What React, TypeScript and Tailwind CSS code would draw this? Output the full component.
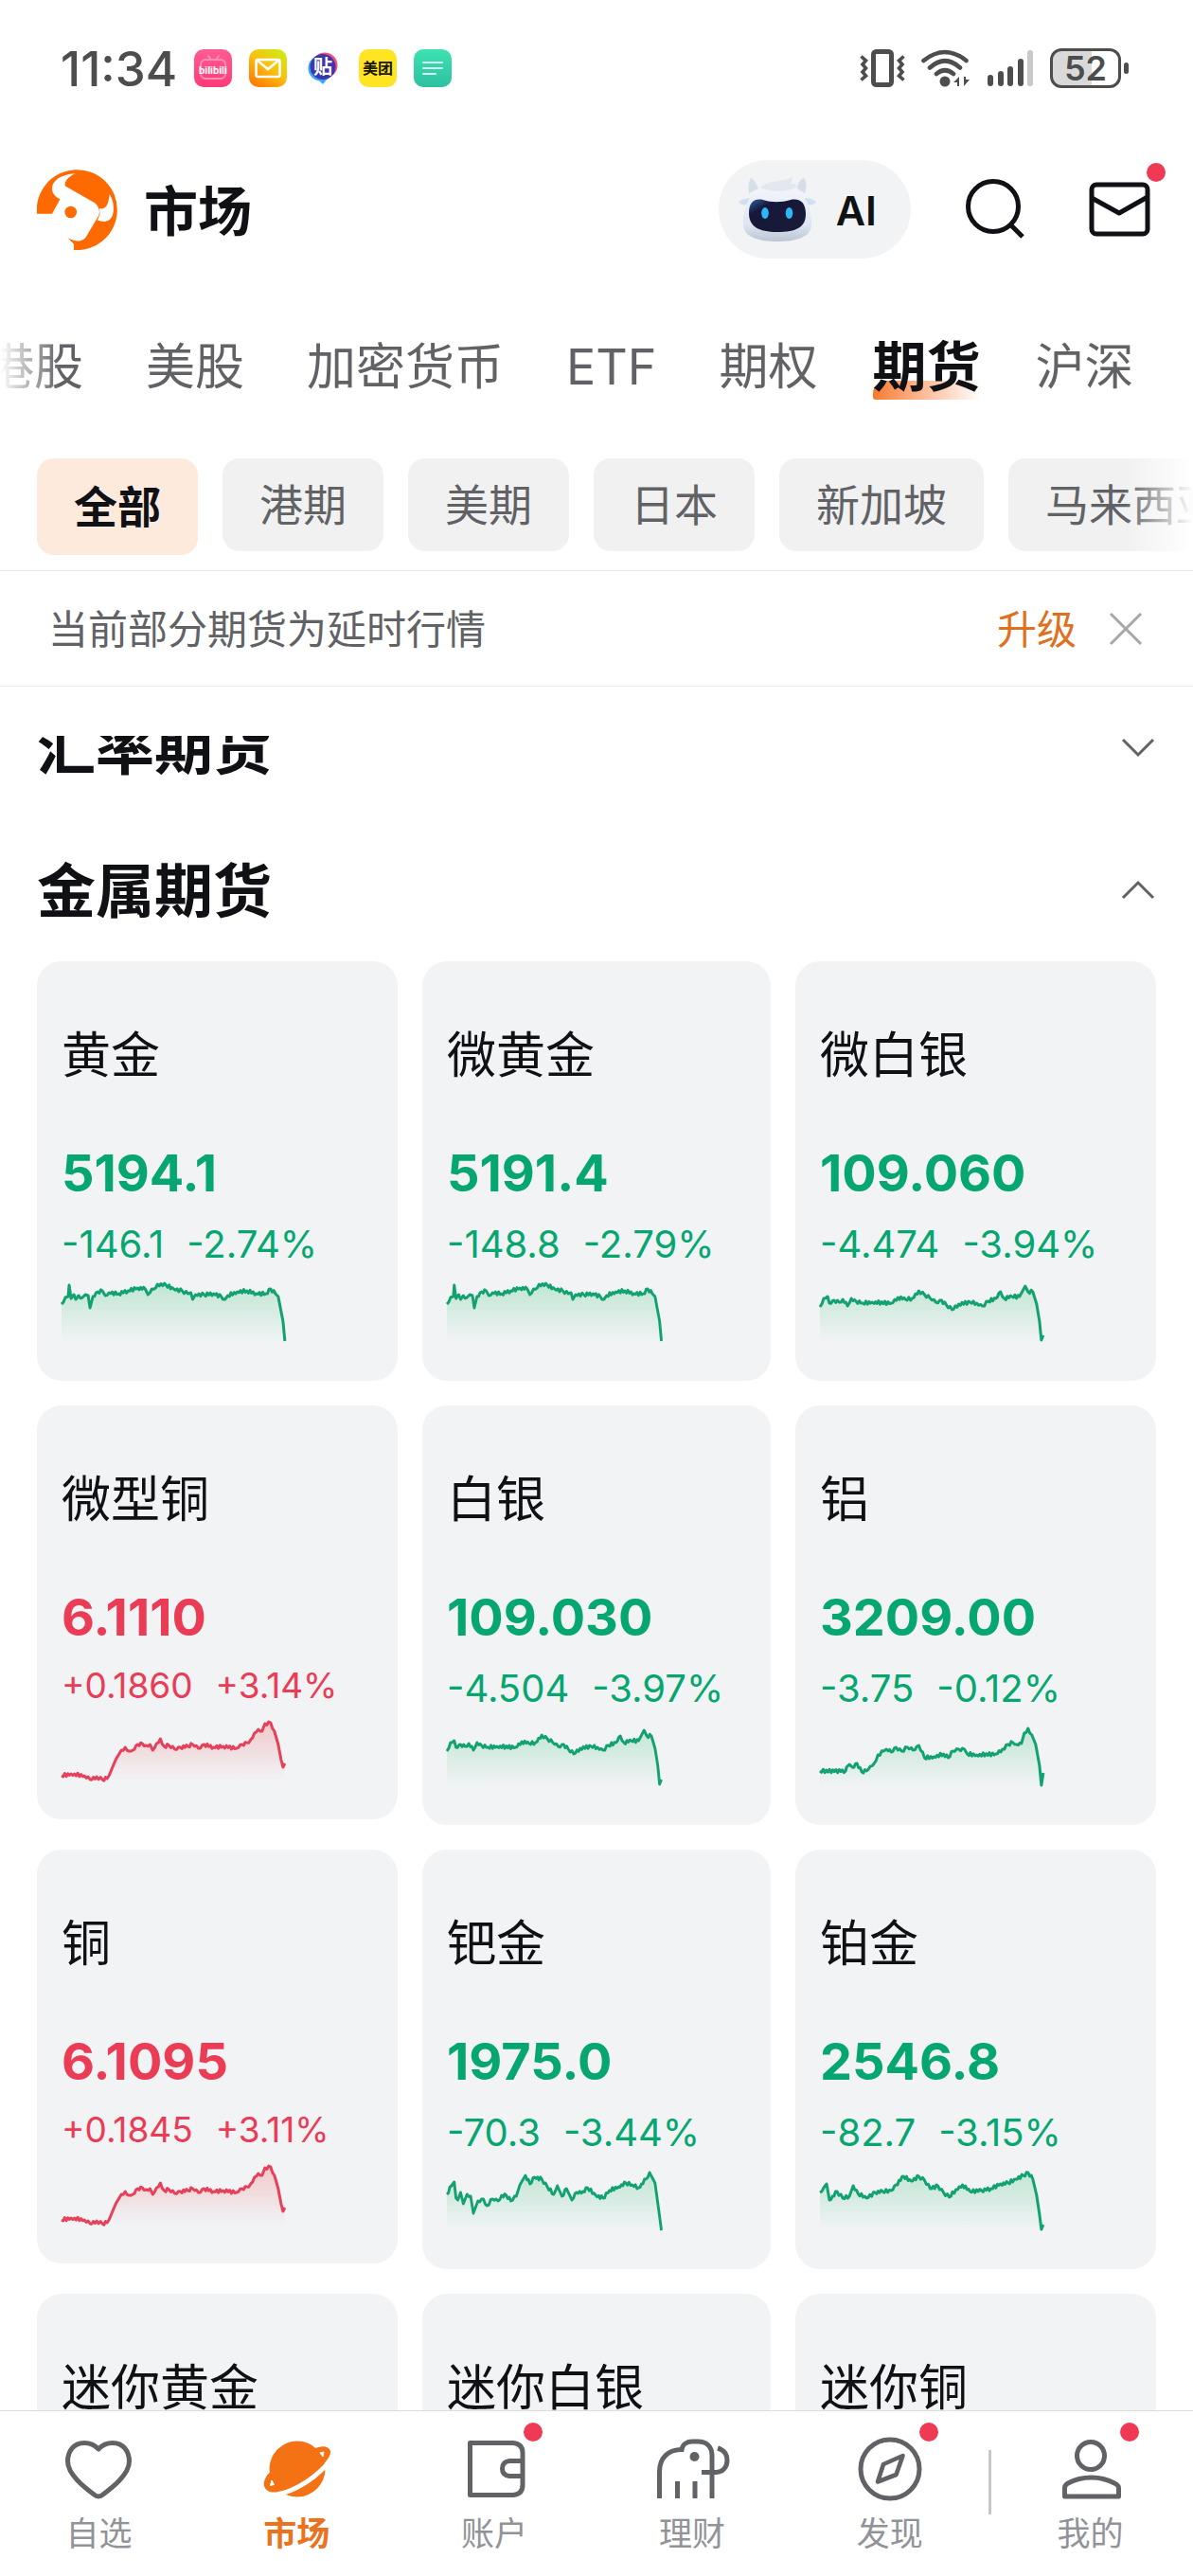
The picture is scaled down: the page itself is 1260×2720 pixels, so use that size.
import type { ReactNode } from "react";
import clsx from "clsx";

type Point = [number, number];

type Quote = {
  name: string;
  price?: string;
  change?: string;
  percent?: string;
  series?: Point[];
  up?: boolean;
  size?: "sm" | "lg";
};

const gold: Point[] = [
  [0, 22], [4, 15], [7, 14], [8, 2], [10, 16], [13, 12], [15, 17], [18, 13], [22, 15], [25, 12], [28, 13], [30, 26],
  [33, 14], [38, 9], [43, 8], [46, 13], [50, 10], [60, 11], [70, 8], [80, 5], [88, 6], [91, 12], [95, 6], [99, 5],
  [101, 1], [110, 2], [118, 6], [127, 8], [133, 11], [136, 10], [138, 17], [141, 12], [150, 12], [160, 11], [168, 14],
  [172, 17], [175, 13], [185, 9], [195, 8], [205, 11], [215, 11], [220, 6], [225, 11], [228, 14], [233, 40], [235, 61],
];

const silver: Point[] = [
  [0, 25], [4, 16], [8, 14], [10, 21], [15, 18], [20, 20], [24, 17], [29, 24], [33, 16], [38, 19], [45, 21], [55, 20],
  [75, 21], [82, 15], [90, 17], [97, 16], [104, 8], [110, 12], [116, 16], [122, 20], [128, 18], [133, 23], [139, 28],
  [146, 22], [158, 20], [165, 21], [171, 24], [177, 19], [185, 16], [190, 9], [194, 16], [202, 14], [210, 14],
  [216, 3], [219, 9], [224, 9], [228, 22], [231, 40], [233, 60], [235, 55],
];

const copper: Point[] = [
  [0, 57], [10, 55], [24, 57], [30, 61], [37, 58], [43, 61], [48, 60], [52, 52], [57, 40], [63, 30], [67, 27],
  [71, 31], [75, 30], [80, 24], [85, 23], [89, 25], [93, 24], [96, 30], [100, 23], [104, 18], [108, 26], [113, 25],
  [119, 29], [125, 27], [133, 26], [138, 24], [144, 28], [150, 24], [160, 27], [170, 26], [184, 28], [190, 24],
  [195, 22], [199, 19], [203, 12], [207, 8], [211, 10], [214, 2], [220, 1], [224, 10], [228, 24], [231, 40],
  [233, 48], [235, 44],
];

const aluminium: Point[] = [
  [0, 46], [27, 46], [28, 42], [31, 39], [34, 42], [39, 38], [44, 47], [49, 46], [53, 41], [57, 38], [61, 29],
  [67, 25], [70, 23], [75, 26], [80, 21], [86, 25], [92, 21], [98, 24], [104, 19], [108, 26], [110, 32], [120, 31],
  [130, 28], [135, 32], [140, 25], [146, 23], [152, 23], [155, 28], [165, 29], [185, 28], [192, 23], [198, 18],
  [203, 16], [207, 18], [212, 17], [215, 6], [219, 1], [223, 8], [227, 18], [231, 40], [233, 61], [235, 48],
];

const palladium: Point[] = [
  [0, 24], [5, 15], [8, 11], [10, 28], [12, 30], [15, 22], [18, 34], [22, 24], [26, 26], [29, 44], [34, 31], [40, 29],
  [44, 36], [50, 29], [56, 31], [60, 25], [65, 25], [70, 31], [76, 26], [80, 14], [86, 4], [91, 13], [96, 6], [104, 8],
  [110, 16], [117, 24], [121, 15], [126, 26], [131, 18], [137, 30], [142, 22], [149, 21], [154, 17], [163, 25],
  [171, 28], [178, 20], [188, 16], [196, 12], [203, 14], [210, 17], [218, 8], [222, 1], [228, 12], [232, 40], [235, 62],
];

const platinum: Point[] = [
  [0, 22], [4, 17], [7, 13], [10, 30], [18, 21], [24, 28], [31, 26], [35, 15], [40, 23], [49, 28], [58, 22], [66, 21],
  [75, 20], [80, 14], [88, 5], [96, 10], [104, 5], [110, 9], [116, 18], [124, 15], [130, 22], [136, 27], [143, 19],
  [150, 14], [158, 21], [170, 20], [180, 18], [190, 13], [198, 12], [206, 8], [214, 4], [219, 1], [224, 8], [228, 25],
  [231, 45], [233, 61], [235, 56],
];

const quotes: Quote[] = [
  { name: "黄金", price: "5194.1", change: "-146.1", percent: "-2.74%", series: gold },
  { name: "微黄金", price: "5191.4", change: "-148.8", percent: "-2.79%", series: gold },
  { name: "微白银", price: "109.060", change: "-4.474", percent: "-3.94%", series: silver },
  { name: "微型铜", price: "6.1110", change: "+0.1860", percent: "+3.14%", series: copper, up: true, size: "sm" },
  { name: "白银", price: "109.030", change: "-4.504", percent: "-3.97%", series: silver },
  { name: "铝", price: "3209.00", change: "-3.75", percent: "-0.12%", series: aluminium },
  { name: "铜", price: "6.1095", change: "+0.1845", percent: "+3.11%", series: copper, up: true, size: "sm" },
  { name: "钯金", price: "1975.0", change: "-70.3", percent: "-3.44%", series: palladium },
  { name: "铂金", price: "2546.8", change: "-82.7", percent: "-3.15%", series: platinum },
  { name: "迷你黄金" },
  { name: "迷你白银" },
  { name: "迷你铜" },
];

const markets = ["港股", "美股", "加密货币", "ETF", "期权", "期货", "沪深"];
const filters = ["全部", "港期", "美期", "日本", "新加坡", "马来西亚"];

// Fills the space between two ticks with small wiggles so the line looks like minute data.
function wiggle(points: Point[]): Point[] {
  const out: Point[] = [];
  points.forEach(([x, y], i) => {
    out.push([x, y]);
    const next = points[i + 1];
    if (!next || Math.abs(next[1] - y) > 9) return;
    const steps = Math.floor((next[0] - x) / 1.6);
    for (let s = 1; s < steps; s++) {
      const t = s / steps;
      const noise = (s % 2 ? 1 : -1) * (0.5 + Math.abs(Math.sin(x * 3 + s * 7)) * 1.3);
      out.push([x + (next[0] - x) * t, y + (next[1] - y) * t + noise]);
    }
  });
  return out;
}

function Sparkline({ id, points, up }: { id: string; points: Point[]; up?: boolean }) {
  const color = up ? "#e6405a" : "#12a170";
  const fill = up ? "#f25050" : "#35c070";
  const line = "M" + wiggle(points).map(([x, y]) => `${x.toFixed(1)} ${y.toFixed(1)}`).join("L");
  return (
    <svg viewBox="0 0 236 62" preserveAspectRatio="none" className="mt-3 block h-[62px] w-[72%] overflow-visible" aria-hidden="true">
      <defs>
        <linearGradient id={id} x1="0" y1="0" x2="0" y2="62" gradientUnits="userSpaceOnUse">
          <stop offset="0" stopColor={fill} stopOpacity="0.26" />
          <stop offset="1" stopColor={fill} stopOpacity="0" />
        </linearGradient>
      </defs>
      <path d={`${line}V62H0Z`} fill={`url(#${id})`} />
      <path d={line} fill="none" stroke={color} strokeWidth="3" strokeLinejoin="round" />
    </svg>
  );
}

function QuoteCard({ quote, id }: { quote: Quote; id: string }) {
  const { size = "lg" } = quote;
  return (
    <a href="#" className="block self-start rounded-[26px] bg-[#f1f3f5] px-[26px] pt-[60px] pb-[41px]">
      <h3 className="text-[52px] leading-[80px] whitespace-nowrap text-[#101114]">{quote.name}</h3>
      {quote.price && (
        <div className={quote.up ? "text-[#eb3c56]" : "text-[#06a670]"}>
          <p className="mt-11 text-[54px] leading-[80px] font-bold">{quote.price}</p>
          <p
            className={clsx(
              "mt-[6px] flex gap-6 whitespace-nowrap",
              size === "lg" ? "text-[40px] leading-[58px]" : "text-[37px] leading-[52px]",
            )}
          >
            <span>{quote.change}</span>
            <span>{quote.percent}</span>
          </p>
        </div>
      )}
      {quote.series && <Sparkline id={id} points={quote.series} up={quote.up} />}
    </a>
  );
}

function StatusBar() {
  return (
    <div className="flex h-36 items-center justify-between pr-[68px] pl-16 text-[#4d4d4d]">
      <div className="flex items-center gap-[18px]">
        <span className="text-[51px] leading-none font-medium">11:34</span>
        <svg width="40" height="40" viewBox="0 0 40 40" aria-label="bilibili">
          <defs>
            <linearGradient id="bili" x1="0" y1="0" x2="0" y2="1">
              <stop offset="0" stopColor="#ff5c94" />
              <stop offset="1" stopColor="#ff3a78" />
            </linearGradient>
          </defs>
          <rect width="40" height="40" rx="10" fill="url(#bili)" />
          <path d="M15 7l3 4M26 7l-3 4" stroke="#ff8db4" strokeWidth="2" strokeLinecap="round" />
          <rect x="7" y="11" width="26" height="20" rx="5" fill="none" stroke="#ff8db4" strokeWidth="2" />
          <text x="20" y="26" textAnchor="middle" fontSize="11" fontWeight="700" fill="#fff" fontFamily="Roboto, sans-serif">
            bilibili
          </text>
        </svg>
        <svg width="40" height="40" viewBox="0 0 40 40" aria-hidden="true">
          <defs>
            <linearGradient id="mail" x1="0.2" y1="1" x2="0.9" y2="0">
              <stop offset="0" stopColor="#ff7a00" />
              <stop offset="0.5" stopColor="#fbbf10" />
              <stop offset="1" stopColor="#c9f012" />
            </linearGradient>
          </defs>
          <rect width="40" height="40" rx="10" fill="url(#mail)" />
          <rect x="7.500" y="11" width="25" height="18" rx="2" fill="none" stroke="#fff" strokeWidth="2.600" />
          <path d="M9 12l11 9 11-9" fill="none" stroke="#fff" strokeWidth="2.600" />
        </svg>
        <svg width="40" height="40" viewBox="0 0 40 40" aria-hidden="true">
          <circle cx="22" cy="17" r="13.500" fill="#f0527c" />
          <circle cx="18" cy="20" r="13.500" fill="#38a6ff" />
          <path d="M15 32l5 5 4-5z" fill="#38a6ff" />
          <circle cx="20" cy="18.500" r="13.500" fill="#3f36a8" />
          <text x="20" y="26" textAnchor="middle" fontSize="20" fontWeight="700" fill="#fff">
            贴
          </text>
        </svg>
        <svg width="40" height="40" viewBox="0 0 40 40" aria-hidden="true">
          <rect width="40" height="40" rx="10" fill="#ffe424" />
          <text x="20" y="26" textAnchor="middle" fontSize="16" fontWeight="700" fill="#1a1800">
            美团
          </text>
        </svg>
        <svg width="40" height="40" viewBox="0 0 40 40" aria-hidden="true">
          <defs>
            <linearGradient id="note" x1="0" y1="0" x2="0" y2="1">
              <stop offset="0" stopColor="#3de3b2" />
              <stop offset="1" stopColor="#2dc0a0" />
            </linearGradient>
          </defs>
          <rect width="40" height="40" rx="10" fill="url(#note)" />
          <path d="M10 14h20M10 20h20M10 26h13" stroke="#d8fff2" strokeWidth="2" strokeLinecap="round" />
        </svg>
      </div>
      <div className="flex items-center gap-[17px]">
        <svg width="48" height="40" viewBox="0 0 48 40" fill="none" stroke="currentColor" aria-hidden="true">
          <rect x="14.500" y="2.500" width="19" height="35" rx="3" strokeWidth="5" />
          <path d="M1.500 7.500l5 4.500-3.500 4 3.500 4-3.500 4 3.500 4-5 4.500M46.500 7.500l-5 4.500 3.500 4-3.500 4 3.500 4-3.500 4 5 4.500" strokeWidth="3.600" />
        </svg>
        <svg width="52" height="40" viewBox="0 0 52 40" fill="none" stroke="currentColor" aria-hidden="true">
          <path d="M2.500 12Q25 -6 47.500 12M9 19.500Q25 5 41 19.500M16 26Q25 18.500 34 26" strokeWidth="4.600" strokeLinecap="round" />
          <circle cx="25" cy="34" r="5.500" fill="currentColor" stroke="none" />
          <path d="M34 35l6-6v10h-2v-4zM51 32l-6 7V29h2v3z" fill="currentColor" stroke="none" />
        </svg>
        <svg width="50" height="40" viewBox="0 0 50 40" fill="currentColor" aria-hidden="true">
          <rect x="1" y="27" width="6" height="12" rx="3" />
          <rect x="12" y="23" width="6" height="16" rx="3" />
          <rect x="22" y="18" width="6" height="21" rx="3" />
          <rect x="33" y="10" width="6" height="29" rx="3" />
          <rect x="43" y="1" width="6" height="38" rx="3" fill="#c9c9c9" />
        </svg>
        <div className="flex items-center gap-[3px]">
          <div className="flex h-[42px] w-[75px] items-center justify-center rounded-[12px] border-[3px] border-current bg-linear-to-r from-[#d9d9d9] from-60% to-transparent to-60%">
            <span className="text-[36px] leading-none font-semibold">52</span>
          </div>
          <div className="h-3 w-[5px] rounded-full bg-current" />
        </div>
      </div>
    </div>
  );
}

function Dot({ className }: { className?: string }) {
  return <span className={clsx("absolute size-5 rounded-full bg-[#ef3a55]", className)} />;
}

function Logo() {
  return (
    <svg width="85" height="85" viewBox="0 0 85 85" aria-hidden="true">
      <path
        d="M0 46.700A42.500 42.500 0 1 1 39 85V78.700L32.500 72C40 76.500 48 77 52 71L65 49C67 45 66 40 61.500 35.500L30 17.500C28 13 34 7 40.500 4.300C25 5 16 12 16 20C16 26 20 29 24.500 31.300L16 46.700Z"
        fill="#ff6a00"
      />
      <path d="M66 41C72 42.500 76 38 76.500 26C81 32 82 42 80 48C77 56 70 56 64 53.500L66.500 47Z" fill="#fff" />
      <circle cx="35.700" cy="45" r="6.300" fill="#ff6a00" />
    </svg>
  );
}

function Robot() {
  return (
    <svg width="84" height="72" viewBox="0 0 84 72" aria-hidden="true">
      <defs>
        <linearGradient id="shell" x1="0" y1="0" x2="0" y2="1">
          <stop offset="0" stopColor="#f5f7fb" />
          <stop offset="0.7" stopColor="#dde6f2" />
          <stop offset="1" stopColor="#bcc5d4" />
        </linearGradient>
        <linearGradient id="visor" x1="0" y1="0" x2="1" y2="1">
          <stop offset="0" stopColor="#2f63a8" />
          <stop offset="0.25" stopColor="#15183a" />
          <stop offset="1" stopColor="#1b1a38" />
        </linearGradient>
      </defs>
      <path d="M12 19C11 11 12 6 14 3C17 4 20 9 22 14ZM71 19C74 11 72 6 70 3C66 4 64 9 63 14Z" fill="#d5dfea" />
      <path d="M1 28C6 25 10 24 13 24L10 31C6 32 3 31 1 28ZM83 28C79 25 75 24 71 24L74 31C78 32 81 31 83 28Z" fill="#cfe0f2" />
      <path d="M6 53C5 36 12 10 41 10C71 10 79 36 78 53C77 66 60 70 42 70C24 70 7 66 6 53Z" fill="url(#shell)" />
      <path d="M24 13C32 5 48 7 58 2C58 5 57 7 55 9C60 8 62 9 63 12C54 18 36 19 24 13Z" fill="#e3e8ee" />
      <path d="M12 40C12 28 18 24 27 26C36 29 46 29 56 26C66 24 72 29 72 41C72 55 62 60 42 60C22 60 12 54 12 40Z" fill="url(#visor)" />
      <ellipse cx="29" cy="40" rx="3.800" ry="6" fill="#2db7fb" />
      <ellipse cx="54.500" cy="40" rx="3.800" ry="6" fill="#2db7fb" />
    </svg>
  );
}

function Header() {
  return (
    <header className="flex items-center justify-between pt-[25px] pr-[42px] pl-[39px]">
      <div className="flex items-center gap-7">
        <Logo />
        <h1 className="pt-1 text-[57px] leading-none font-bold text-[#101114]">市场</h1>
      </div>
      <div className="flex items-center gap-14 text-[#101114]">
        <button type="button" className="flex h-[104px] items-center gap-5 rounded-full bg-[#f1f3f5] pr-9 pl-5">
          <Robot />
          <span className="pt-[2px] text-[43px] leading-none font-semibold">AI</span>
        </button>
        <button type="button" aria-label="搜索">
          <svg width="72" height="72" viewBox="0 0 72 72" fill="none" stroke="currentColor" strokeWidth="5" aria-hidden="true">
            <circle cx="31" cy="33" r="26.500" />
            <path d="M49 52L62 65" />
          </svg>
        </button>
        <button type="button" aria-label="消息" className="relative">
          <svg width="72" height="72" viewBox="0 0 72 72" fill="none" stroke="currentColor" strokeWidth="5" strokeLinejoin="round" aria-hidden="true">
            <rect x="7" y="10" width="59" height="52" rx="5" />
            <path d="M7 24L36 40L66 23" />
          </svg>
          <Dot className="-top-[13px] left-[65px]" />
        </button>
      </div>
    </header>
  );
}

function MarketTabs() {
  return (
    <nav className="relative mt-[75px] overflow-hidden">
      <div className="-ml-4 flex h-20 items-center gap-[66px] text-[52px] leading-[80px] whitespace-nowrap text-[#616266]">
        {markets.map((m) =>
          m === "期货" ? (
            <a key={m} href="#" aria-current="page" className="relative -mx-2 text-[57px] font-bold text-[#101114]">
              <span className="absolute bottom-[6px] left-0 h-5 w-full rounded-tl-[14px] rounded-bl-[3px] bg-linear-to-r from-[#f47a26] to-white" />
              <span className="relative">{m}</span>
            </a>
          ) : (
            <a key={m} href="#">
              {m}
            </a>
          ),
        )}
      </div>
      <div className="absolute inset-y-0 left-0 w-16 bg-linear-to-r from-white to-transparent" />
    </nav>
  );
}

function Filters() {
  return (
    <div className="relative mt-14 overflow-hidden pb-4">
      <div className="flex items-start gap-[26px] pl-[39px] text-[46px] whitespace-nowrap">
        {filters.map((f, i) => (
          <button
            key={f}
            type="button"
            className={clsx(
              "shrink-0 rounded-[18px] px-[39px]",
              i === 0 ? "bg-[#fdeadd] leading-[102px] font-bold text-[#101114]" : "bg-[#f1f1f1] leading-[98px] text-[#616266]",
            )}
          >
            {f}
          </button>
        ))}
      </div>
      <div className="absolute inset-y-0 right-0 w-[72px] bg-linear-to-l from-white to-transparent" />
    </div>
  );
}

function Notice() {
  return (
    <div className="flex h-[123px] items-center border-y border-[#e9e9e9] pt-[2px] pr-[53px] pl-[51px] text-[42px] leading-none">
      <p className="flex-1 text-[#616266]">当前部分期货为延时行情</p>
      <a href="#" className="text-[#e07020]">
        升级
      </a>
      <button type="button" aria-label="关闭" className="ml-[34px]">
        <svg width="36" height="36" viewBox="0 0 36 36" stroke="#a8a8aa" strokeWidth="3" aria-hidden="true">
          <path d="M2 1L34 33M34 1L2 33" />
        </svg>
      </button>
    </div>
  );
}

function SectionHeader({ title, open }: { title: string; open?: boolean }) {
  return (
    <button type="button" aria-expanded={!!open} className="flex h-[151px] w-full items-center justify-between">
      <h2 className="pt-1 text-[62px] leading-none font-bold text-[#101114]">{title}</h2>
      <svg width="38" height="24" viewBox="0 0 38 24" fill="none" stroke="#616266" strokeWidth="3" aria-hidden="true">
        <path d={open ? "M3 20L19 4L35 20" : "M3 4L19 20L35 4"} />
      </svg>
    </button>
  );
}

function NavItem({ label, active, dot, children }: { label: string; active?: boolean; dot?: boolean; children: ReactNode }) {
  return (
    <a href="#" className="flex flex-1 flex-col items-center pt-[21px]">
      <span className="relative">
        <svg width="80" height="80" viewBox="0 0 80 80" fill="none" stroke="#616266" strokeWidth="5" aria-hidden="true">
          {children}
        </svg>
        {dot && <Dot className="-top-[9px] left-[71px]" />}
      </span>
      <span className={clsx("mt-1 text-[35px] leading-[48px]", active ? "font-bold text-[#ea731f]" : "text-[#919398]")}>
        {label}
      </span>
    </a>
  );
}

function BottomNav() {
  return (
    <nav className="flex h-[175px] shrink-0 items-start border-t border-[#dedede] bg-white pr-1">
      <NavItem label="自选">
        <path
          d="M40 19C36 14.500 31 12.500 25 12.500C14 12.500 7.500 21 7.500 32C7.500 46 26 60 36 67.500Q40 70.500 44 67.500C54 60 72.500 46 72.500 32C72.500 21 66 12.500 55 12.500C49 12.500 44 14.500 40 19Z"
          strokeLinejoin="round"
        />
      </NavItem>
      <NavItem label="市场" active>
        <circle cx="41" cy="40" r="29.500" fill="#f47114" stroke="none" />
        <path d="M14 67.500C32 66 46 57.500 58 48.500C66 42 72 37 77 29" stroke="#fff" strokeWidth="5" />
        <path
          d="M14 42C8 46 5 53 6 58C8 64 14 65.500 21 64C33 61.500 45 54.500 56 46C68 37 77 27 76 21C74 15 66 15 58 19Z"
          fill="#f47114"
          stroke="none"
        />
        <path d="M14 52L16.500 56.500L12.500 57.500ZM65 23L69 22L68 27Z" fill="#fff" stroke="#fff" strokeWidth="1" />
      </NavItem>
      <NavItem label="账户" dot>
        <path d="M14.500 12.500H60Q70 13.500 70 23V57Q70 66.500 60 67.500H14.500Z" strokeLinejoin="round" />
        <path d="M70 31.500H56Q48.500 32.500 48.500 39.500Q48.500 46.500 56 47.500H70" />
      </NavItem>
      <NavItem label="理财">
        <path d="M5.500 71V43C5.500 28 15 19.500 29 19.500C30 13.500 35 11 40 11H46C56 11 61 17 61 26V71M24.500 53V71M43 53V71" />
        <path d="M67 18C74 20 77 25 77 31C77 38 72 43.500 66 43.500H50" />
        <circle cx="42.500" cy="27" r="5" fill="#616266" stroke="none" />
      </NavItem>
      <NavItem label="发现" dot>
        <circle cx="40" cy="40" r="31" />
        <path d="M53.500 26L33 35L27 53.500L46.500 46Z" strokeLinejoin="round" strokeWidth="4.600" />
      </NavItem>
      <div className="mt-[41px] h-[68px] w-[3px] bg-[#c6c8c8]" />
      <NavItem label="我的" dot>
        <circle cx="40" cy="26" r="14.500" />
        <path d="M12.500 69V60Q12.500 57 16 55C31 47 50 47 65 55Q69.500 57 69.500 60V69Z" strokeLinejoin="round" />
      </NavItem>
    </nav>
  );
}

export default function App() {
  return (
    <div className="flex h-screen flex-col overflow-hidden bg-white font-['Inter','Noto_Sans_CJK_SC',sans-serif]">
      <StatusBar />
      <Header />
      <MarketTabs />
      <Filters />
      <Notice />
      <main className="mt-[52px] min-h-0 flex-1 overflow-hidden px-[39px]">
        {/* list is scrolled a little, so the first heading is cut off */}
        <div className="-mt-16">
          <SectionHeader title="汇率期货" />
          <SectionHeader title="金属期货" open />
          <div className="grid auto-rows-[443px] grid-cols-[381fr_368fr_381fr] gap-[26px]">
            {quotes.map((q, i) => (
              <QuoteCard key={q.name} quote={q} id={`spark-${i}`} />
            ))}
          </div>
        </div>
      </main>
      <BottomNav />
    </div>
  );
}
